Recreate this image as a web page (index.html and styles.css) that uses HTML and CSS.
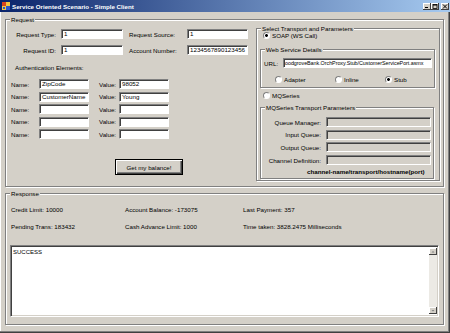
FILE: index.html
```html
<!DOCTYPE html>
<html>
<head>
<meta charset="utf-8">
<link rel="stylesheet" href="styles.css">
</head>
<body>
<div class="window">
  <div class="titlebar">
    <svg class="app-icon" viewBox="0 0 8 8" width="8" height="8">
      <rect x="0" y="0" width="8" height="8" fill="#f3c642"/>
      <rect x="0" y="0" width="4" height="4" fill="#d8461c"/>
      <rect x="4" y="4" width="4" height="4" fill="#2d58c8"/>
      <rect x="1" y="5" width="2" height="2" fill="#2d58c8"/>
    </svg>
    <span class="title">Service Oriented Scenario - Simple Client</span>
    <div class="caption-buttons">
      <span class="cbtn"><svg viewBox="0 0 8 7" width="8" height="7"><rect x="2" y="4" width="3" height="1" fill="#000"/></svg></span>
      <span class="cbtn"><svg viewBox="0 0 8 7" width="8" height="7"><rect x="2" y="1.5" width="4" height="4" fill="none" stroke="#000" stroke-width="0.8"/><rect x="2" y="1.5" width="4" height="1" fill="#000"/></svg></span>
      <span class="cbtn close"><svg viewBox="0 0 8 7" width="8" height="7"><path d="M2 1.5 L6 5.5 M6 1.5 L2 5.5" stroke="#000" stroke-width="1"/></svg></span>
    </div>
  </div>

  <div class="client">
    <div class="group request">
      <span class="group-title">Request</span>
      <div class="request-left">
        <div class="req-grid">
          <span class="lbl-r">Request Type:</span>
          <div class="tb">1</div>
          <span class="lbl-l">Request Source:</span>
          <div class="tb">1</div>
          <span class="lbl-r">Request ID:</span>
          <div class="tb">1</div>
          <span class="lbl-l">Account Number:</span>
          <div class="tb">1234567890123456</div>
        </div>
        <div class="auth-title">Authentication Elements:</div>
        <div class="auth-grid">
          <span class="lbl-n">Name:</span><div class="tb">ZipCode</div><span class="lbl-v">Value:</span><div class="tb">98052</div>
          <span class="lbl-n">Name:</span><div class="tb">CustomerName</div><span class="lbl-v">Value:</span><div class="tb">Young</div>
          <span class="lbl-n">Name:</span><div class="tb"></div><span class="lbl-v">Value:</span><div class="tb"></div>
          <span class="lbl-n">Name:</span><div class="tb"></div><span class="lbl-v">Value:</span><div class="tb"></div>
          <span class="lbl-n">Name:</span><div class="tb"></div><span class="lbl-v">Value:</span><div class="tb"></div>
        </div>
        <div class="button"><span>Get my balance!</span></div>
      </div>

      <div class="group transport">
        <span class="group-title">Select Transport and Parameters</span>
        <div class="radio-row soap"><span class="radio checked"></span><span>SOAP (WS Call)</span></div>
        <div class="group wsd">
          <span class="group-title">Web Service Details</span>
          <div class="url-row">
            <span class="url-lbl">URL:</span>
            <div class="tb url">oodgroveBank.OrchProxy.Stub/CustomerServicePort.asmx</div>
          </div>
          <div class="mode-row">
            <div class="radio-row"><span class="radio"></span><span>Adapter</span></div>
            <div class="radio-row"><span class="radio"></span><span>Inline</span></div>
            <div class="radio-row"><span class="radio checked"></span><span>Stub</span></div>
          </div>
        </div>
        <div class="radio-row mq"><span class="radio"></span><span>MQSeries</span></div>
        <div class="group mqgroup">
          <span class="group-title">MQSeries Transport Parameters</span>
          <div class="mq-grid">
            <span class="lbl-mq">Queue Manager:</span><div class="tb disabled"></div>
            <span class="lbl-mq">Input Queue:</span><div class="tb disabled"></div>
            <span class="lbl-mq">Output Queue:</span><div class="tb disabled"></div>
            <span class="lbl-mq">Channel Definition:</span><div class="tb disabled"></div>
          </div>
          <div class="channel-hint">channel-name/transport/hostname(port)</div>
        </div>
      </div>
    </div>

    <div class="group response">
      <span class="group-title">Response</span>
      <div class="resp-grid">
        <span>Credit Limit: 10000</span>
        <span>Account Balance: -173075</span>
        <span>Last Payment: 357</span>
        <span>Pending Trans: 183432</span>
        <span>Cash Advance Limit: 1000</span>
        <span>Time taken: 3828.2475 Milliseconds</span>
      </div>
      <div class="textarea">
        <div class="ta-text">SUCCESS</div>
        <div class="vscroll">
          <div class="sb-btn"><svg viewBox="0 0 8 7" width="8" height="7"><path d="M2.5 4.5 L4 3 L5.5 4.5 Z" fill="#808080"/></svg></div>
          <div class="sb-track"></div>
          <div class="sb-btn"><svg viewBox="0 0 8 7" width="8" height="7"><path d="M2.5 3 L4 4.5 L5.5 3 Z" fill="#808080"/></svg></div>
        </div>
      </div>
    </div>
  </div>
</div>
</body>
</html>
```

FILE: styles.css
```css
* {
  box-sizing: border-box;
}

body {
  margin: 0;
  background: #d4d0c8;
  font-family: "Liberation Sans", Arial, sans-serif;
  font-size: 6.2px;
  line-height: 7px;
  color: #000;
}

.window {
  width: 450px;
  height: 333px;
  background: #d4d0c8;
  overflow: hidden;
  box-shadow: inset -1px -1px 0 #404040, inset -2px -2px 0 #808080, inset 1px 0 0 #ffffff;
}

/* ---------- title bar ---------- */
.titlebar {
  height: 12px;
  display: flex;
  align-items: center;
  padding-left: 2px;
  background: linear-gradient(to right, #0a246a, #a6caf0);
}

.app-icon {
  display: block;
  margin-right: 2px;
}

.title {
  flex: 1;
  color: #ffffff;
  font-weight: bold;
  font-size: 6.2px;
  white-space: nowrap;
}

.caption-buttons {
  display: flex;
  margin-right: 1px;
}

.cbtn {
  width: 8px;
  height: 7px;
  background: #d4d0c8;
  box-shadow: inset -1px -1px 0 #404040, inset 1px 1px 0 #ffffff;
}

.cbtn svg {
  display: block;
}

.cbtn.close {
  margin-left: 2px;
}

/* ---------- client area ---------- */
.client {
  padding: 7px 6px 0 5px;
}

.group {
  position: relative;
  border: 1px solid #808080;
  box-shadow: inset 1px 1px 0 #ffffff, 1px 1px 0 #ffffff;
}

.group-title {
  position: absolute;
  top: -4px;
  left: 4px;
  padding: 0 1px;
  background: #d4d0c8;
  line-height: 7px;
  white-space: nowrap;
}

/* textboxes */
.tb {
  height: 10px;
  background: #ffffff;
  border: 1px solid;
  border-color: #808080 #ffffff #ffffff #808080;
  box-shadow: inset 1px 1px 0 #404040;
  padding: 0 2px;
  line-height: 8px;
  white-space: nowrap;
  overflow: hidden;
}

.tb.disabled {
  background: #d4d0c8;
}

/* ---------- request group ---------- */
.request {
  width: 439px;
  height: 168px;
  display: flex;
  padding-top: 8px;
}

.request-left {
  width: 250px;
}

.req-grid {
  margin-top: 1px;
  display: grid;
  grid-template-columns: 55px 62px 64px 61px;
  grid-auto-rows: 10px;
  row-gap: 6px;
  align-items: center;
}

.lbl-r {
  text-align: right;
  padding-right: 5px;
}

.lbl-l {
  padding-left: 6px;
}

.auth-title {
  margin-top: 9px;
  padding-left: 9px;
}

.auth-grid {
  margin-top: 8px;
  display: grid;
  grid-template-columns: 33px 50px 30px 50px;
  grid-auto-rows: 10px;
  row-gap: 2.5px;
  align-items: center;
}

.lbl-n {
  padding-left: 5px;
}

.lbl-v {
  padding-left: 10px;
}

.button {
  margin: 20px 0 0 109px;
  width: 68px;
  height: 16px;
  border: 1px solid #000;
  background: #d4d0c8;
  box-shadow: inset 1px 1px 0 #ffffff, inset -1px -1px 0 #404040, inset -2px -2px 0 #808080;
  display: flex;
  align-items: center;
  justify-content: center;
}

/* ---------- transport group ---------- */
.transport {
  width: 184px;
  height: 153px;
  padding-left: 3px;
}

.radio-row {
  display: flex;
  align-items: center;
  gap: 2px;
  height: 7px;
  white-space: nowrap;
}

.radio {
  width: 7px;
  height: 7px;
  border-radius: 50%;
  border: 1px solid;
  border-color: #808080 #ffffff #ffffff #808080;
  background: #ffffff;
  flex: none;
}

.radio.checked {
  background: radial-gradient(circle, #000 0 1.2px, #ffffff 1.6px);
}

.soap {
  margin: 3px 0 0 3px;
}

.wsd {
  margin-top: 10px;
  width: 175px;
  height: 39px;
}

.url-row {
  margin-top: 8px;
  display: flex;
  align-items: center;
}

.url-lbl {
  width: 22px;
  padding-left: 3px;
}

.tb.url {
  width: 149px;
  font-size: 5.4px;
  padding: 0 1px;
  letter-spacing: -0.05px;
}

.mode-row {
  margin-top: 8px;
  padding-left: 14px;
  display: grid;
  grid-template-columns: 60px 50px auto;
}

.mq {
  margin: 4px 0 0 3px;
}

.mqgroup {
  margin-top: 8px;
  width: 174px;
  height: 72px;
}

.mq-grid {
  margin-top: 9px;
  display: grid;
  grid-template-columns: 65px 105px;
  grid-auto-rows: 10px;
  row-gap: 2.7px;
  align-items: center;
}

.lbl-mq {
  text-align: right;
  padding-right: 5px;
  white-space: nowrap;
}

.channel-hint {
  margin-top: 3px;
  padding-left: 46px;
  font-weight: bold;
  white-space: nowrap;
}

/* ---------- response group ---------- */
.response {
  margin-top: 6px;
  width: 439px;
  height: 132px;
  padding-top: 12px;
}

.resp-grid {
  padding-left: 5px;
  display: grid;
  grid-template-columns: 114px 118px auto;
  grid-auto-rows: 7px;
  row-gap: 10px;
  white-space: nowrap;
}

.textarea {
  margin: 15px 0 0 4px;
  width: 429px;
  height: 72px;
  background: #ffffff;
  border: 1px solid;
  border-color: #808080 #ffffff #ffffff #808080;
  box-shadow: inset 1px 1px 0 #404040, inset -1px -1px 0 #d4d0c8;
  display: flex;
  padding: 1px 1px 1px 1px;
}

.ta-text {
  flex: 1;
  padding: 2px 1px;
  font-size: 6px;
}

.vscroll {
  width: 8px;
  display: flex;
  flex-direction: column;
  padding: 1px 0;
}

.sb-btn {
  height: 7px;
  background: #d4d0c8;
  box-shadow: inset -1px -1px 0 #404040, inset 1px 1px 0 #ffffff;
}

.sb-btn svg {
  display: block;
}

.sb-track {
  flex: 1;
  background: #eceae5;
}
```
